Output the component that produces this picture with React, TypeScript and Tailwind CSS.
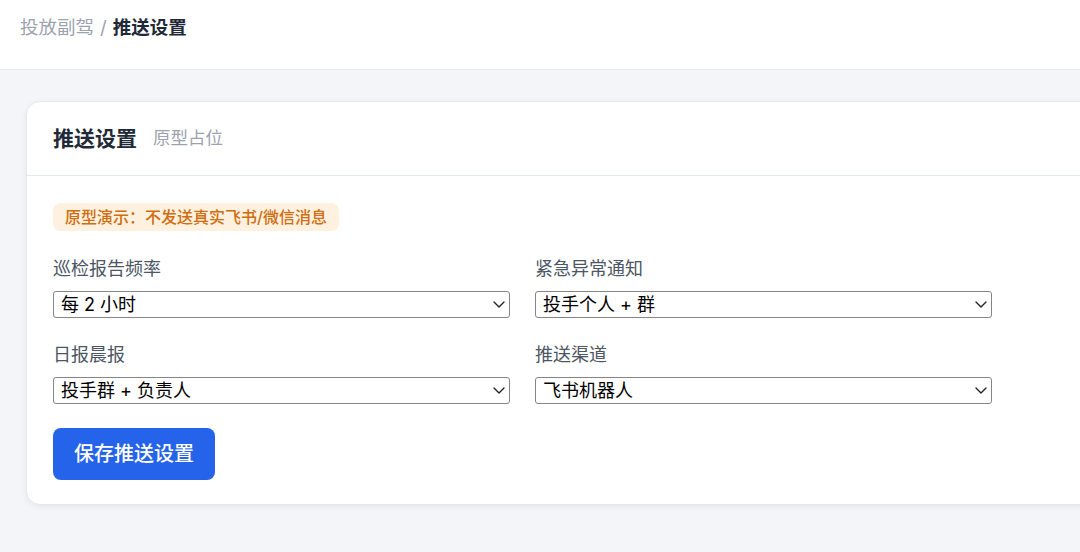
import React from "react";

type Field = { label: string; value: string; options: string[] };

const fields: Field[] = [
  { label: "巡检报告频率", value: "每 2 小时", options: ["每 1 小时", "每 2 小时", "每 4 小时"] },
  { label: "紧急异常通知", value: "投手个人 + 群", options: ["投手个人", "投手个人 + 群"] },
  { label: "日报晨报", value: "投手群 + 负责人", options: ["投手群", "投手群 + 负责人"] },
  { label: "推送渠道", value: "飞书机器人", options: ["飞书机器人", "企业微信"] },
];

function SelectField({ field }: { field: Field }) {
  return (
    <div className="flex flex-col">
      <label className="mb-[10px] text-[18px] leading-[24px] text-[#4b5563]">{field.label}</label>
      <div className="relative">
        <select
          defaultValue={field.value}
          className="block h-[27px] w-full appearance-none rounded-[3px] border border-[#858585] bg-white pl-[7px] pr-6 text-[18px] leading-[25px] text-black outline-none"
        >
          {field.options.map((o) => (
            <option key={o}>{o}</option>
          ))}
        </select>
        <svg
          className="pointer-events-none absolute right-[5px] top-[10px] h-[7px] w-[12px]"
          viewBox="0 0 12 7"
          fill="none"
          stroke="#222"
          strokeWidth={1.4}
          strokeLinecap="round"
          strokeLinejoin="round"
        >
          <path d="M1 1l5 5 5-5" />
        </svg>
      </div>
    </div>
  );
}

export default function App() {
  return (
    <div
      className="min-h-[552px] overflow-hidden bg-[#f3f5f9]"
      style={{ fontFamily: "Inter, 'Noto Sans CJK SC', sans-serif" }}
    >
      <header className="flex h-[70px] items-center border-b border-[#e3e6eb] bg-white px-5 pb-[13px] text-[18.5px]">
        <span className="text-[#9ca3af]">投放副驾</span>
        <span className="mx-[6px] text-[#9ca3af]">/</span>
        <span className="font-semibold text-[#1f2937]">推送设置</span>
      </header>

      <main className="pl-[26px] pt-[31px]">
        <div className="w-[1100px] rounded-[14px] border border-[#e5e8ee] bg-white shadow-[0_2px_6px_rgba(15,23,42,0.06)]">
          <div className="flex h-[74px] items-center gap-[16px] border-b border-[#e3e7ee] px-[26px]">
            <h1 className="text-[21px] font-bold text-[#1f2937]">推送设置</h1>
            <span className="text-[17.5px] text-[#9ca3af]">原型占位</span>
          </div>

          <div className="px-[26px] pb-[24px] pt-[27px]">
            <div className="inline-flex h-[28px] items-center rounded-[7px] bg-[#fff1df] px-[12px] text-[16px] font-medium text-[#cf6d0f]">
              原型演示：不发送真实飞书/微信消息
            </div>

            <div className="mt-[26px] grid w-[939px] grid-cols-2 gap-x-[25px] gap-y-[25px]">
              {fields.map((f) => (
                <SelectField key={f.label} field={f} />
              ))}
            </div>

            <button className="mt-[24px] h-[52px] rounded-[8px] bg-[#2563eb] px-[21px] text-[20px] font-medium text-white">
              保存推送设置
            </button>
          </div>
        </div>
      </main>
    </div>
  );
}
